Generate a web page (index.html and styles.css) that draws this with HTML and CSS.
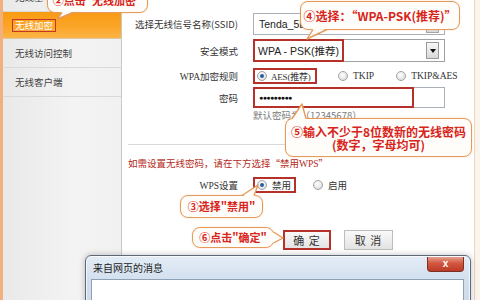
FILE: index.html
```html
<!DOCTYPE html>
<html lang="zh-CN">
<head>
<meta charset="utf-8">
<link rel="stylesheet" href="styles.css">
</head>
<body>
<div class="page">
  <aside class="sidebar">
    <ul class="nav">
      <li>无线基本设置</li>
      <li class="active"><span class="mark-text">无线加密</span></li>
      <li>无线访问控制</li>
      <li>无线客户端</li>
    </ul>
  </aside>
  <main class="content">
    <div class="row r-ssid">
      <label>选择无线信号名称(SSID)</label>
      <div class="field ssid"><span class="val">Tenda_5E0A20</span><span class="mini"></span></div>
    </div>
    <div class="row r-mode">
      <label>安全模式</label>
      <div class="field select"><span class="sel-val">WPA - PSK(推荐)</span><span class="drop"><i></i></span></div>
    </div>
    <div class="row r-rule">
      <label class="mono">WPA加密规则</label>
      <div class="opts">
        <span class="opt marked aes"><span class="radio on"></span><span class="mono aes-txt">AES(推荐)</span></span>
        <span class="opt tkip"><span class="radio"></span><span class="mono">TKIP</span></span>
        <span class="opt tkipaes"><span class="radio"></span><span class="mono">TKIP&amp;AES</span></span>
      </div>
    </div>
    <div class="row r-pw">
      <label>密码</label>
      <div class="field pw"><span class="pw-val">●●●●●●●●●</span></div>
    </div>
    <div class="hint">默认密码为（12345678）</div>
    <div class="sep"></div>
    <p class="note">如需设置无线密码，请在下方选择“禁用<span class="mono">WPS</span>”</p>
    <div class="row r-wps">
      <label><span class="mono">WPS</span>设置</label>
      <div class="opts">
        <span class="opt marked off"><span class="radio on"></span><span>禁用</span></span>
        <span class="opt en"><span class="radio"></span><span>启用</span></span>
      </div>
    </div>
    <div class="buttons">
      <button class="btn ok">确 定</button>
      <button class="btn">取 消</button>
    </div>
  </main>
</div>

<div class="callout c2">②点击"无线加密"</div>
<div class="callout c4">④选择：“WPA-PSK(推荐)”</div>
<div class="callout c5">⑤输入不少于8位数新的无线密码<br>(数字，字母均可)</div>
<div class="callout c3">③选择"禁用"</div>
<div class="callout c6">⑥点击"确定"</div>

<svg class="pointers" width="480" height="300" viewBox="0 0 480 300">
  <g fill="#fffdf9" stroke="none">
    <polygon points="62,11 74,11 57,19"/>
    <polygon points="313,28 327,28 307,39"/>
    <polygon points="292,120 306,120 302,104"/>
    <polygon points="242,197 254,197 258,185"/>
    <polygon points="272,232 272,243 283,238"/>
  </g>
  <g fill="none" stroke="#e69a5a" stroke-width="1.4" stroke-linejoin="round">
    <polyline points="62,12.5 57,19 74,12.5"/>
    <polyline points="313,29.5 307,39 327,29.5"/>
    <polyline points="292,118.5 302,104 306,118.5"/>
    <polyline points="242,195.5 258,185 254,195.5"/>
    <polyline points="273.5,232 283,238 273.5,243"/>
  </g>
</svg>

<div class="dialog">
  <div class="dlg-title">来自网页的消息</div>
  <span class="dlg-close">x</span>
  <div class="dlg-body"></div>
</div>
</body>
</html>
```

FILE: styles.css
```css
* { box-sizing: border-box; }
html, body { margin: 0; padding: 0; }
body {
  width: 480px;
  height: 300px;
  overflow: hidden;
  position: relative;
  background: #fbf4ec;
  font-family: "Noto Sans CJK SC", "Liberation Sans", sans-serif;
  font-size: 9.5px;
  color: #333;
}
.mono { font-family: "Liberation Serif", "Noto Sans CJK SC", serif; }

.page {
  display: flex;
  height: 300px;
}

/* sidebar */
.sidebar {
  width: 122px;
  flex: none;
  border-left: 3px solid #f2b07e;
  border-right: 1px solid #c9c9c9;
  box-shadow: inset -2px 0 0 #f1f1f1;
  background: linear-gradient(90deg, #e9e9e9 0%, #f3f3f3 60%, #f1f1f1 100%);
}
.nav {
  list-style: none;
  margin: -17px 0 0;
  padding: 0;
}
.nav li {
  height: 29px;
  line-height: 28px;
  padding-left: 12px;
  border-bottom: 1px solid #d9d9d9;
  color: #444;
  white-space: nowrap;
}
.nav li.active {
  height: 27px;
  line-height: 26px;
  padding-left: 9px;
  background: linear-gradient(180deg, #f89c12 0%, #fba52a 60%, #fcb546 100%);
  color: #fff;
  border-bottom-color: #e0c6a0;
}
.mark-text {
  border: 1.5px solid #c3372b;
  padding: 0 2px;
  line-height: 11px;
  display: inline-block;
}

/* content */
.content {
  flex: 1;
  background: #fff;
  margin-right: 5px;
  border-right: 1px solid #efd6bb;
  padding-top: 13px;
}
.row {
  display: flex;
  align-items: center;
}
.row > label {
  width: 116px;
  flex: none;
  text-align: right;
  margin-right: 15px;
  color: #333;
  white-space: nowrap;
}
.r-ssid { height: 22px; }
.r-mode { height: 23px; margin-top: 4px; }
.r-rule { height: 16px; margin-top: 6px; }
.r-pw { height: 21px; margin-top: 3px; }

.field {
  width: 192px;
  height: 100%;
  border: 1px solid #a9b0b8;
  display: flex;
  align-items: center;
  position: relative;
  background: #fff;
  font-family: "Liberation Sans", "Noto Sans CJK SC", sans-serif;
  font-size: 10.5px;
  color: #222;
  white-space: nowrap;
}
.ssid .val { padding-left: 5px; }
.mini {
  margin-left: auto;
  margin-right: 5px;
  width: 13px;
  height: 14px;
  margin-top: 4px;
  border: 1px solid #a5a5a5;
  background: linear-gradient(#f7f7f7, #dadada);
}
.select { border-color: #a0a0a0; }
.sel-val {
  align-self: stretch;
  width: 91px;
  margin: -1px 0 -1px -1px;
  padding-left: 5px;
  display: flex;
  align-items: center;
  box-shadow: inset 0 0 0 2px #b5312a;
  font-family: "Liberation Sans", "Noto Sans CJK SC", sans-serif;
}
.drop {
  margin-left: auto;
  margin-right: 5px;
  width: 13px;
  height: 17px;
  border: 1px solid #9a9a9a;
  background: linear-gradient(#f8f8f8, #d8d8d8);
  display: flex;
  align-items: center;
  justify-content: center;
}
.drop i {
  width: 0;
  height: 0;
  border-left: 3px solid transparent;
  border-right: 3px solid transparent;
  border-top: 4px solid #111;
}
.pw-val {
  align-self: stretch;
  width: 161px;
  margin: -1px 0 -1px -1px;
  padding-left: 6px;
  display: flex;
  align-items: center;
  box-shadow: inset 0 0 0 2px #b5312a;
  font-size: 7px;
  letter-spacing: -0.6px;
  color: #111;
}

.opts {
  display: flex;
  align-items: center;
  height: 100%;
}
.opt {
  display: flex;
  align-items: center;
  height: 100%;
  gap: 5px;
  color: #333;
  white-space: nowrap;
}
.opt.marked {
  box-shadow: inset 0 0 0 2px #b5312a;
  padding-left: 4px;
}
.aes { width: 64px; gap: 4px; }
.aes-txt { font-size: 9px; letter-spacing: -0.2px; }
.tkip { margin-left: 21px; }
.tkipaes { margin-left: 22px; }
.off { width: 43px; }
.en { margin-left: 17px; }

.radio {
  width: 10px;
  height: 10px;
  border-radius: 50%;
  border: 1px solid #a3a3a3;
  background: radial-gradient(circle at 40% 35%, #ffffff 0%, #e6e6e6 60%, #cfcfcf 100%);
  flex: none;
  position: relative;
}
.radio.on::after {
  content: "";
  position: absolute;
  left: 2px;
  top: 2px;
  width: 4px;
  height: 4px;
  border-radius: 50%;
  background: #245fa6;
}

.hint {
  margin-left: 131px;
  margin-top: 1px;
  line-height: 12px;
  color: #7a7a7a;
}
.sep {
  height: 1px;
  background: #d9d9d9;
  margin: 23px 4px 0 6px;
}
.note {
  margin: 12px 0 0 6px;
  line-height: 13px;
  color: #b52a22;
}
.r-wps { height: 16px; margin-top: 6px; }

.buttons {
  display: flex;
  gap: 13px;
  margin: 37px 0 0 161px;
}
.btn {
  width: 49px;
  height: 20px;
  border: 1px solid #bdbdbd;
  background: linear-gradient(#f9f9f9, #e3e3e3);
  font-family: "Noto Sans CJK SC", sans-serif;
  font-size: 11px;
  color: #333;
  padding: 0;
  letter-spacing: 1px;
}
.btn.ok {
  width: 48px;
  border: 2px solid #b5312a;
}

/* callouts */
.callout {
  position: absolute;
  display: flex;
  align-items: center;
  justify-content: center;
  text-align: center;
  background: #fffdf9;
  border: 1.4px solid #e69a5a;
  border-radius: 8px;
  box-shadow: 0 0 2px rgba(230, 154, 90, 0.35);
  color: #d8241b;
  font-weight: bold;
  font-size: 12px;
  line-height: 13px;
  white-space: nowrap;
  z-index: 2;
}
.c2 { left: 47px; top: -12px; width: 101px; height: 25px; font-size: 11px; }
.c4 { left: 300px; top: 1px; width: 160px; height: 29px; }
.c5 { left: 285px; top: 118px; width: 187px; height: 39px; }
.c3 { left: 180px; top: 195px; width: 83px; height: 23px; font-size: 11px; }
.c6 { left: 192px; top: 227px; width: 82px; height: 21px; font-size: 11px; }

.pointers {
  position: absolute;
  left: 0;
  top: 0;
  z-index: 3;
  pointer-events: none;
}

/* dialog */
.dialog {
  position: absolute;
  left: 85px;
  top: 255px;
  width: 386px;
  height: 60px;
  border: 1px solid #5d6976;
  border-radius: 6px 6px 0 0;
  background: linear-gradient(180deg, #e4edf6 0%, #d3e0ee 40%, #c8d7e7 100%);
  box-shadow: inset 0 0 0 1px rgba(255, 255, 255, 0.7), 0 0 6px rgba(0, 0, 0, 0.25);
  z-index: 4;
}
.dlg-title {
  position: absolute;
  left: 7px;
  top: 5px;
  font-size: 10px;
  color: #1b1b1b;
  line-height: 13px;
}
.dlg-close {
  position: absolute;
  right: 6px;
  top: 1px;
  width: 37px;
  height: 15px;
  border: 1px solid #7b2f25;
  border-top: none;
  border-radius: 0 0 4px 4px;
  background: linear-gradient(180deg, #e3a08f 0%, #d3573f 45%, #bb3b27 100%);
  color: #fff;
  font-family: "Liberation Sans", sans-serif;
  font-weight: bold;
  font-size: 10px;
  line-height: 13px;
  text-align: center;
}
.dlg-body {
  position: absolute;
  left: 5px;
  right: 6px;
  top: 23px;
  bottom: 0;
  background: #fff;
  border: 1px solid #8ea1b5;
}
```
